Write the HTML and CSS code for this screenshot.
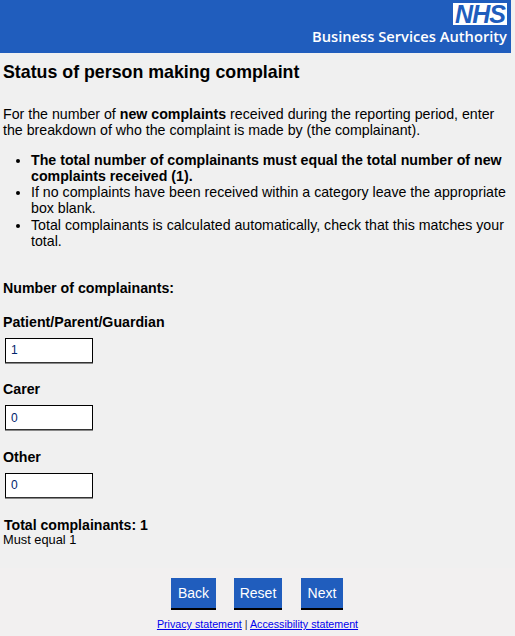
FILE: index.html
```html
<!DOCTYPE html>
<html lang="en">
<head>
<meta charset="utf-8">
<title>Status of person making complaint</title>
<link rel="stylesheet" href="styles.css">
</head>
<body>
<header class="banner">
  <span class="nhs">NHS</span>
  <span class="bsa">Business Services Authority</span>
</header>
<main class="content">
  <h1>Status of person making complaint</h1>
  <p class="intro">For the number of <b>new complaints</b> received during the reporting period, enter the breakdown of who the complaint is made by (the complainant).</p>
  <ul class="rules">
    <li><b>The total number of complainants must equal the total number of new complaints received (1).</b></li>
    <li>If no complaints have been received within a category leave the appropriate box blank.</li>
    <li>Total complainants is calculated automatically, check that this matches your total.</li>
  </ul>
  <h2>Number of complainants:</h2>
  <div class="field">
    <label for="a">Patient/Parent/Guardian</label>
    <input id="a" type="text" value="1">
  </div>
  <div class="field">
    <label for="b">Carer</label>
    <input id="b" type="text" value="0">
  </div>
  <div class="field">
    <label for="c">Other</label>
    <input id="c" type="text" value="0">
  </div>
  <div class="total">Total complainants: 1</div>
  <div class="must">Must equal 1</div>
</main>
<footer class="foot">
  <div class="buttons">
    <button class="btn back" type="button">Back</button>
    <button class="btn reset" type="button">Reset</button>
    <button class="btn next" type="button">Next</button>
  </div>
  <div class="links"><a href="#">Privacy statement</a> | <a href="#">Accessibility statement</a></div>
</footer>
</body>
</html>
```
FILE: styles.css
```css
html, body { margin: 0; padding: 0; }
body {
  width: 515px;
  height: 636px;
  overflow: hidden;
  background: #f2f0f0;
  color: #000;
  font-family: "Liberation Sans", Arial, sans-serif;
  font-size: 14.2px;
  line-height: 16.3px;
}
.banner {
  width: 511px;
  height: 53px;
  box-sizing: border-box;
  padding: 3px 4px 0 0;
  background: #205dbd;
  display: flex;
  flex-direction: column;
  align-items: flex-end;
}
.nhs {
  width: 54px;
  height: 22px;
  background: #fff;
  color: #205dbd;
  font-size: 25px;
  font-weight: bold;
  font-style: italic;
  line-height: 22px;
  text-align: center;
  letter-spacing: -1px;
}
.bsa {
  margin-top: 2px;
  color: #fff;
  font-family: "Open Sans", sans-serif;
  font-size: 14.7px;
  font-weight: 600;
  line-height: 19px;
  white-space: nowrap;
}
.content {
  height: 515px;
  box-sizing: border-box;
  padding: 0 3px;
  background: #f0f0f0;
}
h1 {
  margin: 0;
  padding-top: 9px;
  font-size: 17.8px;
  line-height: 20px;
  font-weight: bold;
}
.intro { margin: 24px 0 0; width: 507px; }
.rules { margin: 13px 0 0; padding: 0 0 0 28px; width: 481px; }
h2 {
  margin: 0;
  padding-top: 33px;
  font-size: 14.2px;
  line-height: 13px;
  font-weight: bold;
}
.field { display: flex; flex-direction: column; align-items: flex-start; }
.field label { margin-top: 18.5px; font-weight: bold; line-height: 16px; }
.field input {
  margin: 8px 0 0 2px;
  width: 88px;
  height: 25px;
  box-sizing: border-box;
  padding: 1px 5px;
  border: 1px solid #000;
  border-bottom-color: #333;
  box-shadow: 0 1px 0 #888;
  background: #fff;
  color: #00246b;
  font-family: "Liberation Sans", Arial, sans-serif;
  font-size: 12px;
  border-radius: 0;
  outline: none;
}
.total { margin: 19px 0 0 1px; font-size: 14.1px; line-height: 16px; font-weight: bold; }
.must { margin-top: 0; font-size: 12.8px; line-height: 14px; }
.foot { padding-top: 10px; display: flex; flex-direction: column; align-items: center; }
.buttons { display: flex; margin-left: -1px; }
.btn {
  height: 32px;
  padding: 0;
  border: 0;
  border-bottom: 2px solid #000;
  background: #205dbd;
  color: #fff;
  font-family: "Liberation Sans", Arial, sans-serif;
  font-size: 14px;
}
.back { width: 45px; }
.reset { width: 48px; margin-left: 18px; }
.next { width: 42px; margin-left: 19px; }
.links { margin-top: 8px; font-size: 10.7px; line-height: 13px; color: #333; }
.links a { color: #0000ee; }
```
